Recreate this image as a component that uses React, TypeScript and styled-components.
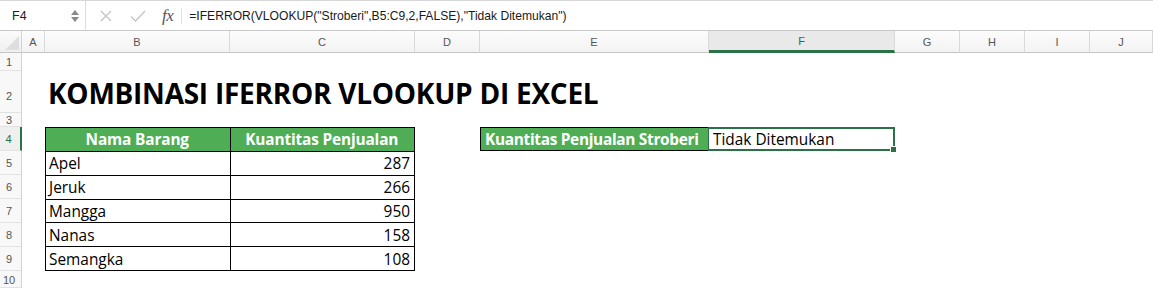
import React from "react";
import styled, { createGlobalStyle } from "styled-components";

const GlobalStyle = createGlobalStyle`
  html, body { margin: 0; padding: 0; background: #fff; }
  body { width: 1153px; height: 289px; overflow: hidden; }
`;

const COLS = ["A", "B", "C", "D", "E", "F", "G", "H", "I", "J"];
const COL_WIDTHS = [23, 185, 185, 65, 229, 186, 65, 65, 65, 63];
const ROW_HEIGHTS = [18, 42, 14, 24, 24, 24, 24, 24, 24, 17];
const ACTIVE_COL = "F";
const ACTIVE_ROW = 4;

const items = [
  { name: "Apel", qty: 287 },
  { name: "Jeruk", qty: 266 },
  { name: "Mangga", qty: 950 },
  { name: "Nanas", qty: 158 },
  { name: "Semangka", qty: 108 },
];

const Page = styled.div`
  width: 1153px;
  height: 289px;
  display: flex;
  flex-direction: column;
  background: #fff;
  font-family: "Open Sans", "Noto Sans", sans-serif;
`;

const FormulaBar = styled.div`
  height: 31px;
  flex: none;
  display: flex;
  align-items: center;
  border-top: 1px solid #d6d6d6;
  border-bottom: 1px solid #c8c8c8;
  box-sizing: border-box;
  background: #fff;
  font-family: "Liberation Sans", Arial, sans-serif;
  color: #222;
`;

const NameBox = styled.div`
  width: 86px;
  height: 100%;
  display: flex;
  align-items: center;
  justify-content: space-between;
  padding: 0 6px 0 12px;
  box-sizing: border-box;
  font-size: 12.5px;
  border-right: 1px solid #dcdcdc;
`;

const Spinner = styled.div`
  display: flex;
  flex-direction: column;
  gap: 2px;
  align-items: center;
`;

const Tools = styled.div`
  display: flex;
  align-items: center;
  gap: 14px;
  padding: 0 8px 0 14px;
  height: 16px;
  border-right: 1px solid #e0e0e0;
  margin-right: 7px;
`;

const Fx = styled.span`
  font-family: "Liberation Serif", "DejaVu Serif", serif;
  font-style: italic;
  font-size: 17px;
  color: #555;
  margin-left: 2px;
  letter-spacing: -0.5px;
`;

const Formula = styled.div`
  font-size: 12.1px;
  color: #1a1a1a;
`;

const Sheet = styled.div`
  display: grid;
  flex: none;
  height: 258px;
  grid-template-columns: 22px ${COL_WIDTHS.map((w) => `${w}px`).join(" ")};
  grid-template-rows: 22px ${ROW_HEIGHTS.map((h) => `${h}px`).join(" ")};
`;

const Corner = styled.div`
  background: linear-gradient(#fafafa, #f0f0f0);
  border-right: 1px solid #d4d4d4;
  border-bottom: 1px solid #c6c6c6;
  box-sizing: border-box;
  position: relative;
  overflow: hidden;
  &::after {
    content: "";
    position: absolute;
    right: 2px;
    bottom: 2px;
    border-left: 14px solid transparent;
    border-bottom: 14px solid #dedede;
  }
`;

const ColHead = styled.div<{ $active?: boolean }>`
  display: flex;
  align-items: center;
  justify-content: center;
  font-family: "Liberation Sans", Arial, sans-serif;
  font-size: 11px;
  color: ${(p) => (p.$active ? "#217346" : "#555")};
  background: ${(p) => (p.$active ? "#e9e9e9" : "linear-gradient(#fcfcfc, #f3f3f3)")};
  border-right: 1px solid #d9d9d9;
  border-bottom: ${(p) => (p.$active ? "3px solid #2a7148" : "1px solid #c6c6c6")};
  box-sizing: border-box;
`;

const RowHead = styled.div<{ $active?: boolean; $row: number }>`
  grid-column: 1;
  grid-row: ${(p) => p.$row + 1};
  display: flex;
  align-items: center;
  justify-content: center;
  padding-top: ${(p) => (p.$row === 2 ? 10 : 2)}px;
  padding-right: 3px;
  font-family: "Liberation Sans", Arial, sans-serif;
  font-size: 11px;
  line-height: 13px;
  color: ${(p) => (p.$active ? "#217346" : "#555")};
  background: ${(p) => (p.$active ? "#efefef" : "#f8f8f8")};
  border-right: ${(p) => (p.$active ? "2px solid #2a7148" : "1px solid #d4d4d4")};
  border-bottom: 1px solid #e2e2e2;
  box-sizing: border-box;
`;

const Title = styled.div`
  grid-column: 3 / -1;
  grid-row: 3;
  display: flex;
  align-items: center;
  padding-left: 3px;
  padding-top: 2px;
  font-family: "Open Sans", "Noto Sans", sans-serif;
  font-weight: 700;
  font-size: 28px;
  letter-spacing: -0.25px;
  color: #000;
  white-space: nowrap;
`;

const DataTable = styled.div`
  grid-column: 3 / 5;
  grid-row: 5 / 11;
  display: grid;
  grid-template-columns: 1fr 1fr;
  grid-template-rows: repeat(6, 1fr);
  box-sizing: border-box;
  border-top: 1px solid #000;
  border-left: 1px solid #000;
`;

const Cell = styled.div<{ $head?: boolean; $right?: boolean }>`
  display: flex;
  align-items: center;
  justify-content: ${(p) => (p.$head ? "center" : p.$right ? "flex-end" : "flex-start")};
  padding: 1px 4px 0 3px;
  font-size: 15.4px;
  font-weight: ${(p) => (p.$head ? 700 : 400)};
  letter-spacing: ${(p) => (p.$head ? "-0.15px" : "0")};
  color: ${(p) => (p.$head ? "#fff" : "#000")};
  background: ${(p) => (p.$head ? "#4fae55" : "#fff")};
  border-right: 1px solid #000;
  border-bottom: 1px solid #000;
  box-sizing: border-box;
  white-space: nowrap;
`;

const KeyCell = styled(Cell)`
  grid-column: 6;
  grid-row: 5;
  border: 1px solid #000;
  justify-content: flex-start;
  padding-left: 4px;
  letter-spacing: -0.3px;
`;

const ResultCell = styled.div`
  grid-column: 7;
  grid-row: 5;
  position: relative;
  display: flex;
  align-items: center;
  padding: 1px 0 0 4px;
  font-size: 15.4px;
  color: #000;
  border: 2px solid #2a7148;
  border-left-width: 1px;
  margin-left: -1px;
  box-sizing: border-box;
  white-space: nowrap;
`;

const FillHandle = styled.span`
  position: absolute;
  right: -4px;
  bottom: -4px;
  width: 5px;
  height: 5px;
  background: #2a7148;
  border: 1px solid #fff;
`;

export default function App() {
  return (
    <Page>
      <GlobalStyle />
      <FormulaBar>
        <NameBox>
          <span>F4</span>
          <Spinner>
            <svg width="8" height="5" viewBox="0 0 8 5">
              <path d="M4 0 L8 5 L0 5 Z" fill="#8a8a8a" />
            </svg>
            <svg width="8" height="5" viewBox="0 0 8 5">
              <path d="M0 0 L8 0 L4 5 Z" fill="#8a8a8a" />
            </svg>
          </Spinner>
        </NameBox>
        <Tools>
          <svg width="12" height="12" viewBox="0 0 12 12">
            <path d="M1 1 L11 11 M11 1 L1 11" stroke="#c4c4c4" strokeWidth="1.3" />
          </svg>
          <svg width="16" height="12" viewBox="0 0 16 12" style={{ marginLeft: 4 }}>
            <path d="M1 6.5 L5.5 11 L15 1" stroke="#c4c4c4" strokeWidth="1.3" fill="none" />
          </svg>
          <Fx>fx</Fx>
        </Tools>
        <Formula>=IFERROR(VLOOKUP("Stroberi",B5:C9,2,FALSE),"Tidak Ditemukan")</Formula>
      </FormulaBar>
      <Sheet>
        <Corner />
        {COLS.map((c) => (
          <ColHead key={c} $active={c === ACTIVE_COL}>
            {c}
          </ColHead>
        ))}
        {ROW_HEIGHTS.map((_, i) => (
          <RowHead key={i} $row={i + 1} $active={i + 1 === ACTIVE_ROW}>
            {i + 1}
          </RowHead>
        ))}
        <Title>KOMBINASI IFERROR VLOOKUP DI EXCEL</Title>
        <DataTable>
          <Cell $head>Nama Barang</Cell>
          <Cell $head $right>
            Kuantitas Penjualan
          </Cell>
          {items.map((it) => (
            <React.Fragment key={it.name}>
              <Cell>{it.name}</Cell>
              <Cell $right>{it.qty}</Cell>
            </React.Fragment>
          ))}
        </DataTable>
        <KeyCell $head>Kuantitas Penjualan Stroberi</KeyCell>
        <ResultCell>
          Tidak Ditemukan
          <FillHandle />
        </ResultCell>
      </Sheet>
    </Page>
  );
}
